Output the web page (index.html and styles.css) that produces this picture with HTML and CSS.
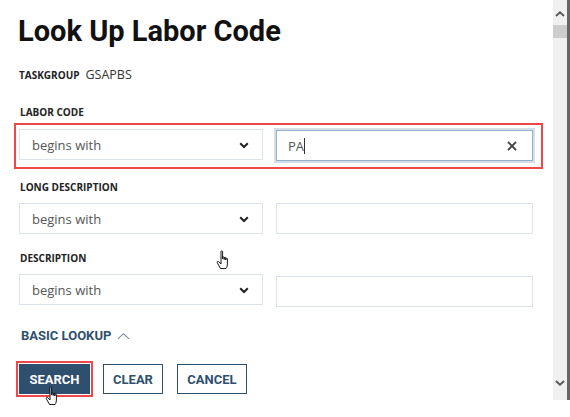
FILE: index.html
```html
<!DOCTYPE html>
<html>
<head>
<meta charset="utf-8">
<link rel="stylesheet" href="styles.css">
</head>
<body>
<div class="frame">
  <div class="content">
    <h1 class="title">Look Up Labor Code</h1>
    <div class="meta"><span class="meta-label">TASKGROUP</span><span class="meta-value">GSAPBS</span></div>

    <div class="field first">
      <div class="label">LABOR CODE</div>
      <div class="row highlighted">
        <div class="select"><span>begins with</span><svg class="chev" viewBox="0 0 10 7" width="10" height="7"><path d="M1.2 1.2 L5 5 L8.8 1.2" fill="none" stroke="#222" stroke-width="2"/></svg></div>
        <div class="input focused"><span class="val">PA</span><span class="caret"></span><svg class="clear" viewBox="0 0 10 10" width="10" height="10"><path d="M1 1 L9 9 M9 1 L1 9" stroke="#444" stroke-width="1.8"/></svg></div>
      </div>
    </div>

    <div class="field">
      <div class="label">LONG DESCRIPTION</div>
      <div class="row">
        <div class="select"><span>begins with</span><svg class="chev" viewBox="0 0 10 7" width="10" height="7"><path d="M1.2 1.2 L5 5 L8.8 1.2" fill="none" stroke="#222" stroke-width="2"/></svg></div>
        <div class="input"></div>
      </div>
    </div>

    <div class="field">
      <div class="label">DESCRIPTION</div>
      <div class="row">
        <div class="select"><span>begins with</span><svg class="chev" viewBox="0 0 10 7" width="10" height="7"><path d="M1.2 1.2 L5 5 L8.8 1.2" fill="none" stroke="#222" stroke-width="2"/></svg></div>
        <div class="input lower"></div>
      </div>
    </div>

    <div class="toggle">BASIC LOOKUP <svg viewBox="0 0 14 8" width="13" height="8"><path d="M1 7 L7 1.5 L13 7" fill="none" stroke="#7a8a99" stroke-width="1.2"/></svg></div>

    <div class="buttons">
      <div class="btn-wrap"><button class="btn primary">SEARCH</button></div>
      <button class="btn clear-btn">CLEAR</button>
      <button class="btn cancel-btn">CANCEL</button>
    </div>
  </div>
  <div class="scrollbar">
    <div class="track">
      <svg class="arrow" viewBox="0 0 10 6" width="10" height="6"><path d="M1 5 L5 1.3 L9 5" fill="none" stroke="#555" stroke-width="1.8"/></svg>
      <div class="thumb"></div>
      <div class="spacer"></div>
      <svg class="arrow" viewBox="0 0 10 6" width="10" height="6"><path d="M1 1 L5 4.7 L9 1" fill="none" stroke="#555" stroke-width="1.8"/></svg>
    </div>
    <div class="edge"></div>
  </div>
</div>
<svg class="cursor cursor-a" viewBox="0 0 17 22" width="17" height="22"><path d="M5 1.5 C5 0.7 6.6 0.7 6.6 1.5 L6.6 9 L6.6 7.5 C6.6 6.7 8.2 6.7 8.2 7.5 L8.2 9.5 L8.2 8 C8.2 7.2 9.8 7.2 9.8 8 L9.8 10 L9.8 8.7 C9.8 8 11.4 8 11.4 8.7 L11.4 14 C11.4 17 10 18.5 10 18.5 L4.5 18.5 L1.2 12.5 C0.8 11.6 2 10.9 2.7 11.6 L5 14 Z" fill="#fff" stroke="#000" stroke-width="0.9" stroke-linejoin="round"/></svg>
<svg class="cursor cursor-b" viewBox="0 0 17 22" width="17" height="22"><path d="M5 1.5 C5 0.7 6.6 0.7 6.6 1.5 L6.6 9 L6.6 7.5 C6.6 6.7 8.2 6.7 8.2 7.5 L8.2 9.5 L8.2 8 C8.2 7.2 9.8 7.2 9.8 8 L9.8 10 L9.8 8.7 C9.8 8 11.4 8 11.4 8.7 L11.4 14 C11.4 17 10 18.5 10 18.5 L4.5 18.5 L1.2 12.5 C0.8 11.6 2 10.9 2.7 11.6 L5 14 Z" fill="#fff" stroke="#000" stroke-width="0.9" stroke-linejoin="round"/></svg>
</body>
</html>
```
FILE: styles.css
```css
* { box-sizing: border-box; }
html, body { margin: 0; padding: 0; background: #fff; }
body { width: 570px; height: 417px; overflow: hidden; position: relative; font-family: "Open Sans", sans-serif; color: #222; }
.frame { display: flex; height: 400px; }
.content { flex: 1; padding: 13px 0 0 14px; }
.title { margin: 0 0 0 4px; font-family: Roboto, sans-serif; font-weight: 700; font-size: 29px; line-height: 36px; color: #111; }
.meta { margin: 17px 0 0 5px; display: flex; align-items: baseline; gap: 6px; line-height: 18px; }
.meta-label { font-size: 10px; font-weight: 700; }
.meta-value { font-size: 12.5px; color: #333; }
.field { margin-top: 11px; }
.field.first { margin-top: 21px; }
.label { margin-left: 6px; font-size: 10px; font-weight: 700; line-height: 14px; color: #222; }
.row { display: flex; align-items: flex-start; gap: 13px; margin: 9px 0 0 5px; }
.row.highlighted { width: 529px; margin: 4px 0 0 0; border: 2px solid #f04848; padding: 4px 8px 6px 3px; }
.select { width: 244px; height: 31px; border: 1px solid #dde3ea; display: flex; align-items: center; justify-content: space-between; padding: 0 13px 0 12px; font-size: 13px; color: #555; }
.chev { margin-top: 1px; }
.input { width: 257px; height: 31px; border: 1px solid #dde3ea; display: flex; align-items: center; padding: 0 11px; font-size: 13px; color: #555; }
.input.lower { margin-top: 2px; }
.input.focused { border: 1px solid #92b0cc; box-shadow: 0 0 0 2px #d5dde5; height: 31px; margin-top: 1px; }
.val { color: #555; }
.caret { display: inline-block; width: 1px; height: 16px; background: #333; }
.clear { margin-left: auto; margin-right: 4px; }
.field + .field { margin-top: 17px; }
.field.first + .field { margin-top: 11px; }
.toggle { margin: 21px 0 0 7px; font-family: Roboto, sans-serif; font-weight: 700; font-size: 13px; line-height: 16px; color: #2f4f6e; display: flex; align-items: center; gap: 6px; }
.buttons { display: flex; align-items: center; gap: 10px; margin: 17px 0 0 2px; }
.btn-wrap { border: 2px solid #f04848; padding: 1px; }
.btn { font-family: Roboto, sans-serif; font-weight: 700; font-size: 13px; color: #2f4f6e; background: #fff; border: 1px solid #2f4f6e; height: 30px; padding: 0; display: block; }
.btn.primary { background: #2f4f6e; color: #fff; width: 71px; }
.clear-btn { width: 60px; }
.cancel-btn { width: 70px; margin-left: 4px; }
.scrollbar { display: flex; width: 17px; height: 400px; }
.track { width: 14px; background: #f0f0f0; display: flex; flex-direction: column; align-items: center; padding: 11px 0 14px; }
.thumb { width: 14px; height: 13px; background: #cdcdcd; margin-top: 8px; }
.spacer { flex: 1; }
.edge { width: 3px; background: #666; }
.cursor { position: absolute; }
.cursor-a { left: 216px; top: 250px; }
.cursor-b { left: 45px; top: 386px; }
```
